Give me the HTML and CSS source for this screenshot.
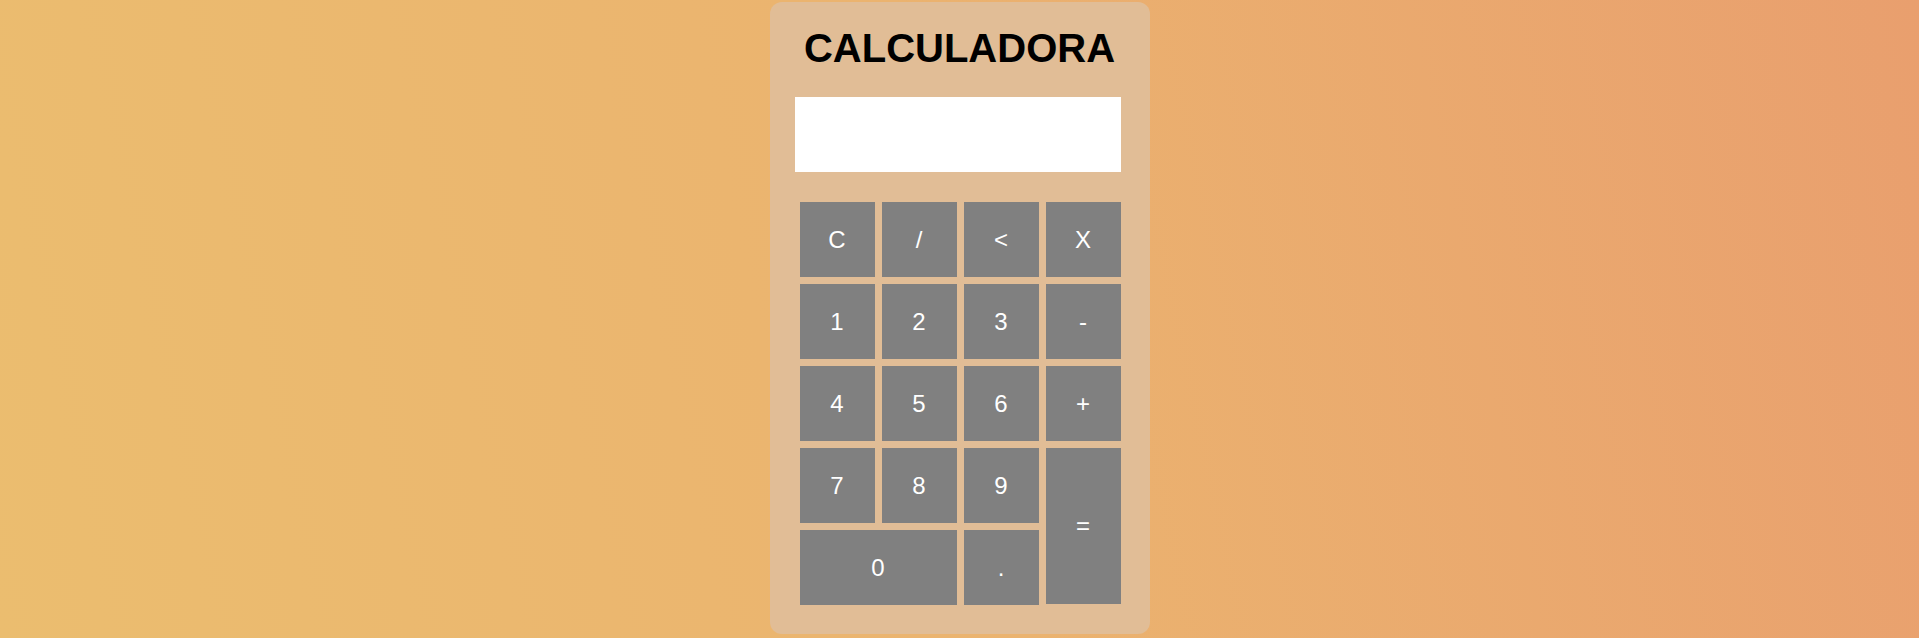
FILE: index.html
```html
<!DOCTYPE html>
<html lang="es">
<head>
<meta charset="utf-8">
<title>Calculadora</title>
<link rel="stylesheet" href="styles.css">
</head>
<body>
<main class="calc">
  <h1 class="calc-title">CALCULADORA</h1>
  <div class="calc-display"></div>
  <div class="calc-keys">
    <button class="key">C</button>
    <button class="key">/</button>
    <button class="key">&lt;</button>
    <button class="key">X</button>
    <button class="key">1</button>
    <button class="key">2</button>
    <button class="key">3</button>
    <button class="key">-</button>
    <button class="key">4</button>
    <button class="key">5</button>
    <button class="key">6</button>
    <button class="key">+</button>
    <button class="key">7</button>
    <button class="key">8</button>
    <button class="key">9</button>
    <button class="key key-equals">=</button>
    <button class="key key-zero">0</button>
    <button class="key">.</button>
  </div>
</main>
</body>
</html>
```
FILE: styles.css
```css
html, body {
  margin: 0;
  height: 638px;
}
body {
  background: linear-gradient(78deg, #ebbd6f 0%, #ebb36f 50%, #e99f6e 100%);
  font-family: "Liberation Sans", Arial, sans-serif;
  overflow: hidden;
}
.calc {
  width: 380px;
  box-sizing: border-box;
  margin: 2px auto 0;
  padding: 23px 29px 29px 25px;
  background: #e1bd96;
  border-radius: 12px;
}
.calc-title {
  margin: 0;
  font-size: 40px;
  font-weight: bold;
  line-height: 46px;
  text-align: center;
  color: #000;
  padding-left: 4px;
}
.calc-display {
  margin-top: 26px;
  height: 75px;
  background: #fff;
}
.calc-keys {
  margin: 30px 0 0 5px;
  display: grid;
  grid-template-columns: repeat(4, 75px);
  grid-auto-rows: 75px;
  gap: 7px;
}
.key {
  border: none;
  margin: 0;
  padding: 0;
  background: #808080;
  color: #fff;
  font-family: "Liberation Sans", Arial, sans-serif;
  font-size: 24px;
}
.key-equals {
  grid-column: 4;
  grid-row: 4 / span 2;
  height: 156px;
  align-self: start;
}
.key-zero {
  grid-column: 1 / span 2;
}
```
